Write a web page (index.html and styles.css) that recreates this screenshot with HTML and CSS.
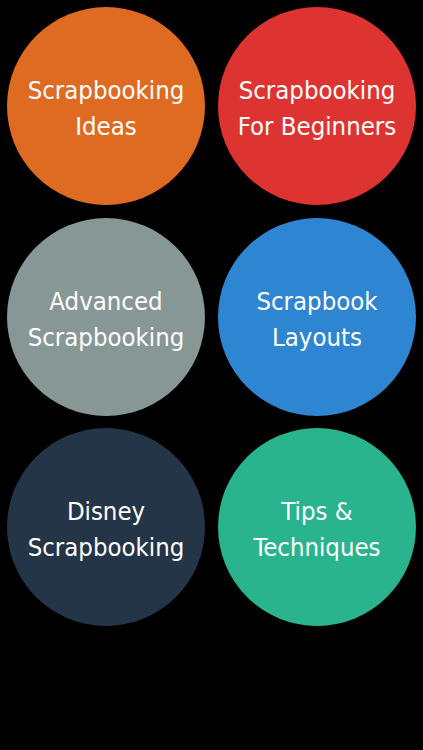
FILE: index.html
```html
<!DOCTYPE html>
<html>
<head>
<meta charset="utf-8">
<link rel="stylesheet" href="styles.css">
</head>
<body>
<div class="grid">
  <div class="circle orange"><span>Scrapbooking<br>Ideas</span></div>
  <div class="circle red"><span>Scrapbooking<br>For Beginners</span></div>
  <div class="circle gray"><span>Advanced<br>Scrapbooking</span></div>
  <div class="circle blue"><span>Scrapbook<br>Layouts</span></div>
  <div class="circle navy"><span>Disney<br>Scrapbooking</span></div>
  <div class="circle teal"><span>Tips &amp;<br>Techniques</span></div>
</div>
</body>
</html>
```
FILE: styles.css
```css
html, body {
  margin: 0;
  padding: 0;
  background: #000;
  height: 100%;
}
.grid {
  display: grid;
  grid-template-columns: 198px 198px;
  column-gap: 13px;
  row-gap: 12.5px;
  padding: 7px 0 0 7px;
}
.circle {
  width: 198px;
  height: 198px;
  box-sizing: border-box;
  padding-top: 4px;
  border-radius: 50%;
  display: flex;
  align-items: center;
  justify-content: center;
  text-align: center;
  color: #fff;
  font-family: "DejaVu Sans Condensed", "DejaVu Sans", sans-serif;
  font-size: 25.5px;
  line-height: 36px;
}
.orange { background: #df6b22; }
.red { background: #de3431; }
.gray { background: #879796; }
.blue { background: #2e85d2; }
.navy { background: #253548; }
.teal { background: #29b48e; }
```
